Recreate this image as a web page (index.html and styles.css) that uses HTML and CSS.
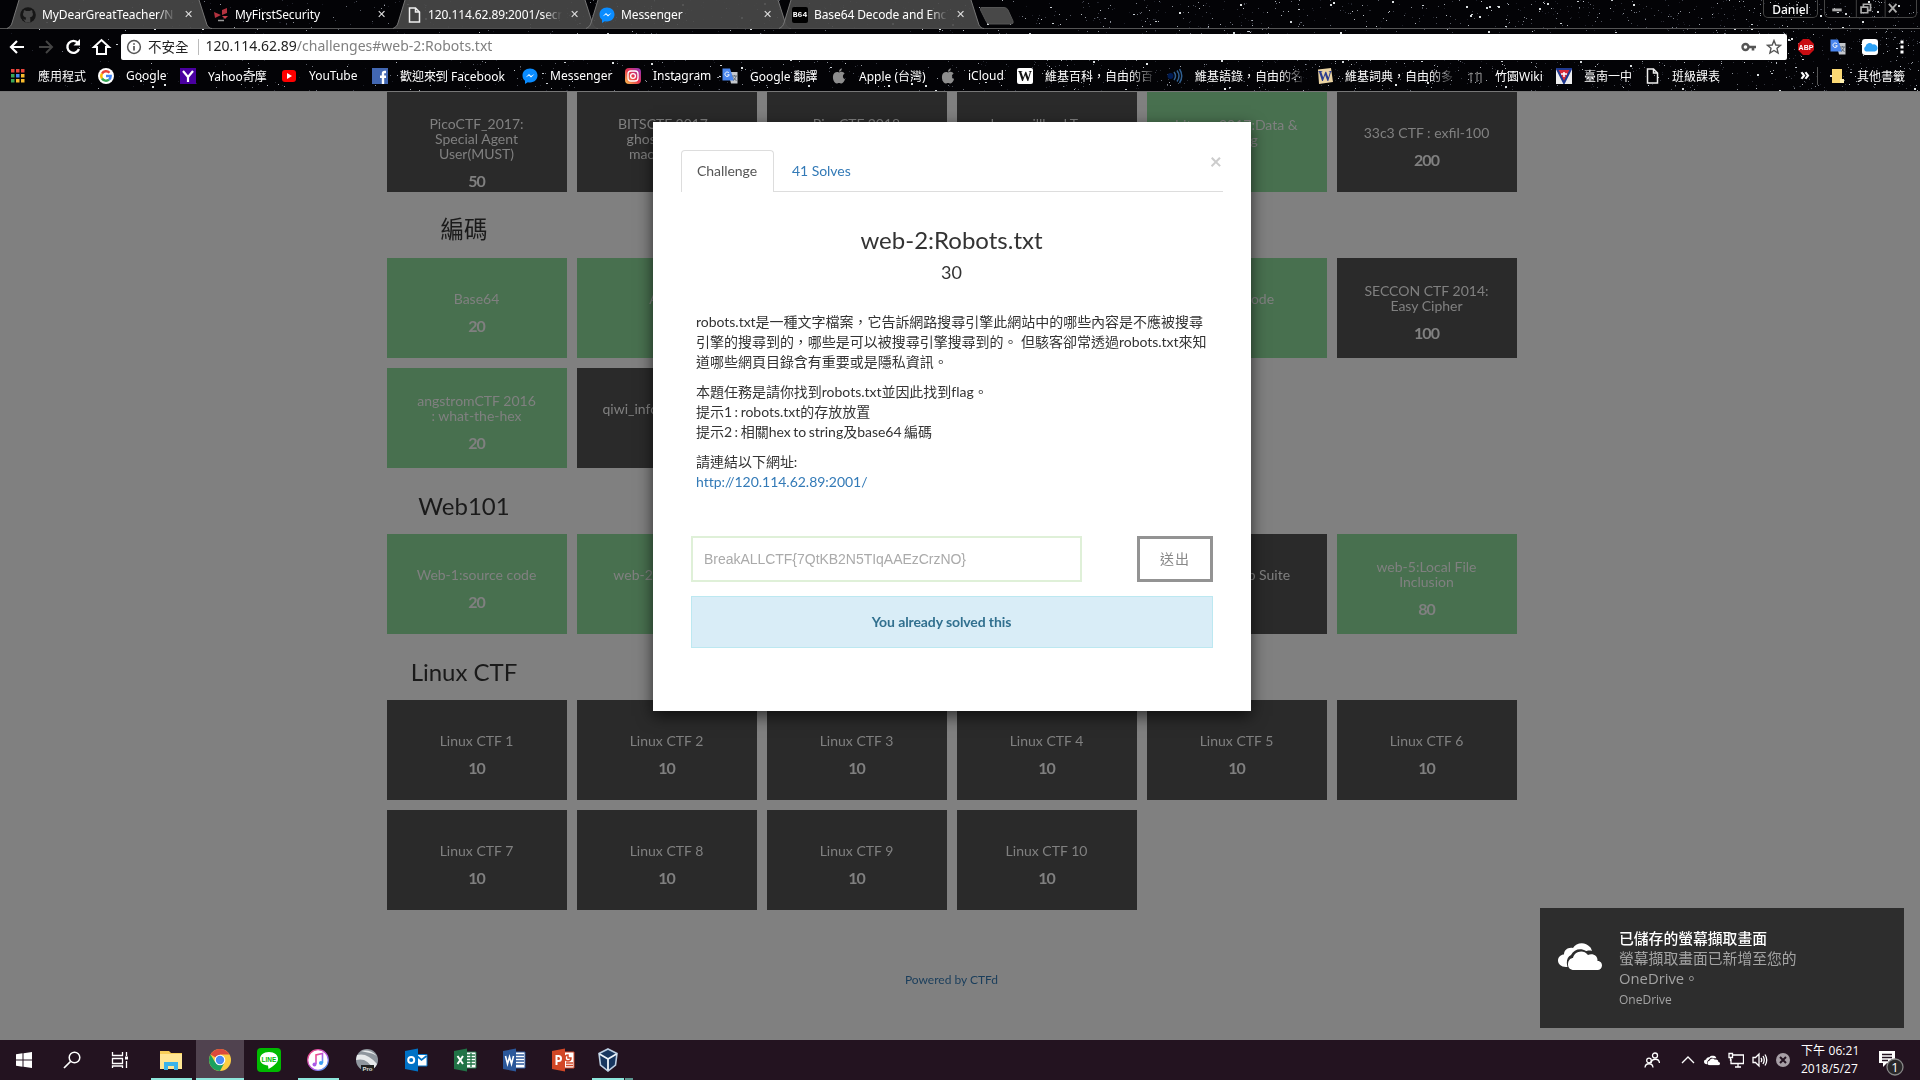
FILE: index.html
```html
<!DOCTYPE html>
<html lang="zh-Hant">
<head>
<meta charset="utf-8">
<title>MyFirstSecurity</title>
<link rel="stylesheet" href="styles.css">
</head>
<body>
<svg width="0" height="0" class="defs">
  <defs>
    <symbol id="tab" viewBox="0 0 205 29"><path d="M0 28.500C3 27 4 26 5 23L12 0H192L200 25C201 27 203 28.500 205 28.500Z" fill="#484848" fill-opacity=".92"/><path d="M0 28.500C3 27 4 26 5 23L12 0M192 0L200 25C201 27 203 28.500 205 28.500" fill="none" stroke="#777"/></symbol>
    <symbol id="page" viewBox="0 0 16 16"><path d="M3.500 1H9.500L13.500 5V15H3.500ZM9.500 1V5H13.500" fill="none" stroke="#eee" stroke-width="1.500"/></symbol>
    <symbol id="msgr" viewBox="0 0 16 16"><path d="M8 .5C3.500.5.5 3.700.5 7.500C.5 10 1.500 11.600 3 12.800V16L5.800 14.200C12 15.500 15.500 11.500 15.500 7.500S12.500.5 8 .5Z" fill="#0a8cff"/><path d="M3.500 9.500L7 6L9 8L12.500 6L9 9.600L7 7.600Z" fill="#fff"/></symbol>
    <symbol id="gtr" viewBox="0 0 16 16"><path d="M6 4H15.500V15.500H9Z" fill="#c4c7cc"/><path d="M.5.500H8L12 12.500H.5Z" fill="#4a86ee"/><path d="M7 5A2.200 2.200 0 1 0 7.300 6.800H5.400" fill="none" stroke="#fff"/><path d="M10 8H15M12.500 7V8M14 8C13.500 10.500 12 12 11 12.500M11.500 9.500L14.500 13" fill="none" stroke="#65707c"/></symbol>
    <symbol id="apple" viewBox="0 0 16 16"><path d="M8 4.500C9 4.500 10 3.500 11.500 4C12.500 4.200 13.200 4.700 13.600 5.500C11 7 11.600 10.300 14 11.300C13.400 13 12 15.500 10.500 15.500C9.500 15.500 9 15 8 15S6.500 15.500 5.700 15.500C3.500 15.500 1.500 11.500 2 8C2.500 4.500 5.500 3.300 8 4.500ZM8 3.800C8 1.800 9.200.5 10.800.2C11 2 9.800 3.700 8 3.800Z" fill="#8d8d8d"/></symbol>
    <symbol id="cloud" viewBox="0 0 44 28"><path d="M8 24C3 24 0 21 0 17.500C0 14 3 11.500 6 11.500C6 7 10 4 15 5C18-.5 27-2 32 4C33 5 33.500 6.500 34 8C31 7 29 8 28 8C23 5 16 6 13 12C9 14 8 19 9.500 24Z" fill="#fff"/><path d="M16 27C12 27 10 24.500 10 21.500C10 17 13 15 15 15C16 9 25 5.500 30 12C35 10 40 13 39.500 18C43 18 44 20.500 44 22.500C44 25 42 27 39.500 27Z" fill="#fff"/></symbol>
  </defs>
</svg>

<header class="chrome">
  <canvas class="stars" id="stars" width="1920" height="91"></canvas>
  <div class="tabstrip">
    <div class="tab"><svg class="tab-shape"><use href="#tab"/></svg>
      <svg class="fav" viewBox="0 0 16 16"><circle cx="8" cy="8" r="7.800" fill="#161616"/><path d="M5.800 15.500V12.800C3.500 13 3.300 11.500 2.500 11M10.300 15.500V12C10.300 11 10 10.700 9.800 10.500C14 10 13 6 12.300 5.300C12.600 4.300 12.300 3.500 12 3.300C11 3.300 10 4 10 4H6S5 3.300 4 3.300C3.700 3.800 3.500 4.500 3.800 5.300C2.500 6.500 2.500 10 6.200 10.500C5.800 11 5.800 12 5.800 12.800V15.500Z" fill="#484848"/></svg>
      <span class="tab-title">MyDearGreatTeacher/N</span><span class="tab-x">✕</span></div>
    <div class="tab active">
      <svg class="fav" viewBox="0 0 16 16"><path d="M1 5L8 8L2 11ZM9 3L14 1V6L9 8Z" fill="#b3323f"/><path d="M9 9H15L12 12Z" fill="#c9404b"/><path d="M5 13.500H11" stroke="#999" stroke-width="1.500"/></svg>
      <span class="tab-title">MyFirstSecurity</span><span class="tab-x">✕</span></div>
    <div class="tab"><svg class="tab-shape"><use href="#tab"/></svg>
      <svg class="fav"><use href="#page"/></svg>
      <span class="tab-title">120.114.62.89:2001/secr</span><span class="tab-x">✕</span></div>
    <div class="tab"><svg class="tab-shape"><use href="#tab"/></svg>
      <svg class="fav"><use href="#msgr"/></svg>
      <span class="tab-title">Messenger</span><span class="tab-x">✕</span></div>
    <div class="tab"><svg class="tab-shape"><use href="#tab"/></svg>
      <span class="fav b64">B64</span>
      <span class="tab-title">Base64 Decode and Enc</span><span class="tab-x">✕</span></div>
    <svg class="newtab" viewBox="0 0 36 18"><path d="M2 .5H25Q28 .5 29 3L34 14Q35 17 32 17H11Q8 17 7 14L1.500 3Q1 .5 2 .5Z" fill="#484848" stroke="#555"/></svg>
    <div class="win">
      <span class="user">Daniel</span>
      <div class="winbtns">
        <svg viewBox="0 0 93 18"><path d="M31.500 0V18M62 0V18" stroke="#444"/><path d="M6 10.500H16" stroke="#aaa" stroke-width="3"/><path d="M36.500 7.500H43.500V13.500H36.500ZM39 7V4.500H46.500V11H44" fill="none" stroke="#aaa" stroke-width="1.800"/><path d="M66 4L74 13M74 4L66 13" stroke="#aaa" stroke-width="2"/></svg>
      </div>
    </div>
  </div>
  <div class="toolbar">
    <svg class="nav" viewBox="0 0 112 26"><path d="M18 13H5M11 7L5 13L11 19" fill="none" stroke="#fff" stroke-width="2.200"/><path d="M33 13H45M40 7L46 13L40 19" fill="none" stroke="#444" stroke-width="2"/><path d="M72 9A6 6 0 1 0 73 15" fill="none" stroke="#fff" stroke-width="2.400"/><path d="M74 5V11.500H67.500Z" fill="#fff"/><path d="M88 13L95.500 6L103 13H100V20H91V13Z" fill="none" stroke="#fff" stroke-width="2"/></svg>
    <div class="omnibox">
      <svg class="info" viewBox="0 0 16 16"><circle cx="8" cy="8" r="6.400" fill="none" stroke="#555" stroke-width="1.500"/><path d="M8 7V11.500M8 4.300V5.800" stroke="#555" stroke-width="1.700"/></svg>
      <span class="insecure">不安全</span><i class="bar"></i>
      <span class="url">120.114.62.89<span>/challenges#web-2:Robots.txt</span></span>
      <svg class="omni-icons" viewBox="0 0 42 16"><circle cx="5.500" cy="8" r="3" fill="none" stroke="#555" stroke-width="2.400"/><path d="M8 8H16M13 8V11.500" stroke="#555" stroke-width="2.600"/><path d="M34 1.500L35.800 6L40.500 6.300L37 9.300L38.100 14L34 11.500L29.900 14L31 9.300L27.500 6.300L32.200 6Z" fill="none" stroke="#555" stroke-width="1.400"/></svg>
    </div>
    <div class="exts">
      <svg viewBox="0 0 16 16"><path d="M5 0H11L16 5V11L11 16H5L0 11V5Z" fill="#c90d12"/><text x="8" y="11" text-anchor="middle" class="abp">ABP</text></svg>
      <svg><use href="#gtr"/></svg>
      <svg viewBox="0 0 16 16"><rect width="16" height="16" rx="3" fill="#fff"/><path d="M4 12.500A2.800 2.800 0 0 1 3.500 7.500A4 4 0 0 1 10.500 5.500A3.400 3.400 0 0 1 13 12.500Z" fill="#2ca0f4"/></svg>
      <svg viewBox="0 0 16 16"><path d="M6.500 1.500H9.500V4.500H6.500ZM6.500 6.500H9.500V9.500H6.500ZM6.500 11.500H9.500V14.500H6.500Z" fill="#fff"/></svg>
    </div>
  </div>
  <nav class="bookmarks">
    <a class="bm"><svg viewBox="0 0 16 16"><path d="M1 1H4.500V4.500H1ZM6 1H9.500V4.500H6ZM11 1H14.500V4.500H11Z" fill="#e8453c"/><path d="M1 6H4.500V9.500H1Z" fill="#3aa757"/><path d="M6 6H9.500V9.500H6Z" fill="#4688f1"/><path d="M11 6H14.500V9.500H11ZM6 11H9.500V14.500H6ZM11 11H14.500V14.500H11Z" fill="#f9bb2d"/><path d="M1 11H4.500V14.500H1Z" fill="#3aa757"/></svg><span>應用程式</span></a>
    <a class="bm"><svg viewBox="0 0 16 16"><circle cx="8" cy="8" r="8" fill="#fff"/><g fill="none" stroke-width="2.400"><path d="M11.500 4.800A4.700 4.700 0 0 0 4 5.600" stroke="#ea4335"/><path d="M4 5.600A4.700 4.700 0 0 0 4 10.500" stroke="#fbbc05"/><path d="M4 10.500A4.700 4.700 0 0 0 11 11.600" stroke="#34a853"/><path d="M11 11.600A4.700 4.700 0 0 0 12.700 8H8" stroke="#4285f4"/></g></svg><span>Google</span></a>
    <a class="bm"><svg viewBox="0 0 16 16"><path d="M0 0H16V16H0Z" fill="#4a00a0"/><path d="M3 3L8 9L13 3M8 9V14" fill="none" stroke="#fff" stroke-width="2.200"/></svg><span>Yahoo奇摩</span></a>
    <a class="bm"><svg viewBox="0 0 16 16"><rect y="2" x="1" width="14" height="12" rx="3" fill="#f00"/><path d="M6 5V11L11 8Z" fill="#fff"/></svg><span>YouTube</span></a>
    <a class="bm"><svg viewBox="0 0 16 16"><path d="M0 0H16V16H0Z" fill="#4267b2"/><path d="M14 4H12.500Q11 4 11 5.500V16M8 8.800H14" fill="none" stroke="#fff" stroke-width="2.400"/></svg><span>歡迎來到 Facebook</span></a>
    <a class="bm"><svg><use href="#msgr"/></svg><span>Messenger</span></a>
    <a class="bm"><svg viewBox="0 0 16 16"><defs><linearGradient id="ig" x1="0" y1="1" x2="1" y2="0"><stop offset="0" stop-color="#ffc64d"/><stop offset=".5" stop-color="#e6334c"/><stop offset="1" stop-color="#8b35c7"/></linearGradient></defs><rect width="16" height="16" rx="4" fill="url(#ig)"/><rect x="3" y="3" width="10" height="10" rx="3" fill="none" stroke="#fff" stroke-width="1.300"/><circle cx="8" cy="8" r="2.400" fill="none" stroke="#fff" stroke-width="1.300"/></svg><span>Instagram</span></a>
    <a class="bm"><svg><use href="#gtr"/></svg><span>Google 翻譯</span></a>
    <a class="bm"><svg><use href="#apple"/></svg><span>Apple (台灣)</span></a>
    <a class="bm"><svg><use href="#apple"/></svg><span>iCloud</span></a>
    <a class="bm"><svg viewBox="0 0 16 16"><rect width="16" height="16" rx="2" fill="#fff"/><text x="8" y="13" text-anchor="middle" class="wiki">W</text></svg><span class="fade">維基百科，自由的百</span></a>
    <a class="bm"><svg viewBox="0 0 16 16"><circle cx="3.500" cy="8" r="3" fill="#001c54"/><path d="M7 4Q10 8 7 12M10 2.500Q14 8 10 13.500M12.500 1Q17 8 12.500 15" fill="none" stroke="#305f91" stroke-width="1.500"/></svg><span class="fade">維基語錄，自由的名</span></a>
    <a class="bm"><svg viewBox="0 0 16 16"><path d="M1 1.500L14 0L16 14L2 16Z" fill="#ead3a3"/><text x="8" y="13" text-anchor="middle" class="wiki blue">W</text></svg><span class="fade">維基詞典，自由的多</span></a>
    <a class="bm"><svg viewBox="0 0 16 16"><path d="M1 7L4 5L6 6M4 5V15M8 6L11 4M10 6L14 5V15M10 6V14" fill="none" stroke="#999"/></svg><span>竹園Wiki</span></a>
    <a class="bm"><svg viewBox="0 0 16 16"><path d="M0 0H16V16H0Z" fill="#eee"/><path d="M1 1H15L8 15Z" fill="#d92b3a" stroke="#203a91" stroke-width="2"/><path d="M5 6H11M8 4V9" stroke="#fff" stroke-width="1.500"/></svg><span>臺南一中</span></a>
    <a class="bm"><svg><use href="#page"/></svg><span>班級課表</span></a>
    <span class="more">»</span>
    <a class="bm other"><svg viewBox="0 0 16 16"><path d="M3 1H13V15H3Z" fill="#fbd974"/><path d="M11 11H15V15H11Z" fill="#fff0b0"/></svg><span>其他書籤</span></a>
  </nav>
</header>

<main class="page">
  <div class="board">
    <div class="grid">
      <div class="tile l3"><p>PicoCTF_2017:<br>Special Agent<br>User(MUST)</p><b>50</b></div>
      <div class="tile l3"><p>BITSCTF 2017 :<br>ghost in the :<br>machine(60)</p><b>50</b></div>
      <div class="tile l3"><p>PicoCTF 2018</p><b>50</b></div>
      <div class="tile l3"><p>haxorvillhackTrace</p><b>50</b></div>
      <div class="tile l2 ok"><p>hitcon-2017:Data &amp;<br>Mining</p><b>50</b></div>
      <div class="tile"><p>33c3 CTF : exfil-100</p><b>200</b></div>
    </div>
    <h3>編碼</h3>
    <div class="grid">
      <div class="tile ok"><p>Base64</p><b>20</b></div>
      <div class="tile ok"><p>ASCII</p><b>20</b></div>
      <div class="tile ok"><p>Hex</p><b>20</b></div>
      <div class="tile ok"><p>Base32</p><b>20</b></div>
      <div class="tile ok"><p>Morse Code</p><b>20</b></div>
      <div class="tile l2"><p>SECCON CTF 2014:<br>Easy Cipher</p><b>100</b></div>
      <div class="tile l2 ok"><p>angstromCTF 2016<br>: what-the-hex</p><b>20</b></div>
      <div class="tile"><p>qiwi_infosec_2016-1</p><b>50</b></div>
    </div>
    <h3>Web101</h3>
    <div class="grid">
      <div class="tile ok"><p>Web-1:source code</p><b>20</b></div>
      <div class="tile ok"><p>web-2:Robots.txt</p><b>30</b></div>
      <div class="tile ok"><p>web-3</p><b>30</b></div>
      <div class="tile"><p>web-4</p><b>50</b></div>
      <div class="tile"><p>web-4:Burp Suite</p><b>50</b></div>
      <div class="tile l2 ok"><p>web-5:Local File<br>Inclusion</p><b>80</b></div>
    </div>
    <h3>Linux CTF</h3>
    <div class="grid">
      <div class="tile"><p>Linux CTF 1</p><b>10</b></div>
      <div class="tile"><p>Linux CTF 2</p><b>10</b></div>
      <div class="tile"><p>Linux CTF 3</p><b>10</b></div>
      <div class="tile"><p>Linux CTF 4</p><b>10</b></div>
      <div class="tile"><p>Linux CTF 5</p><b>10</b></div>
      <div class="tile"><p>Linux CTF 6</p><b>10</b></div>
      <div class="tile"><p>Linux CTF 7</p><b>10</b></div>
      <div class="tile"><p>Linux CTF 8</p><b>10</b></div>
      <div class="tile"><p>Linux CTF 9</p><b>10</b></div>
      <div class="tile"><p>Linux CTF 10</p><b>10</b></div>
    </div>
  </div>
  <footer class="powered">Powered by CTFd</footer>

  <section class="modal">
    <div class="modal-tabs"><span class="mtab on">Challenge</span><span class="mtab">41 Solves</span><span class="close">×</span></div>
    <h2>web-2:Robots.txt</h2>
    <h4>30</h4>
    <div class="desc">
      <p>robots.txt是一種文字檔案，它告訴網路搜尋引擎此網站中的哪些內容是不應被搜尋<br>引擎的搜尋到的，哪些是可以被搜尋引擎搜尋到的。 但駭客卻常透過robots.txt來知<br>道哪些網頁目錄含有重要或是隱私資訊。</p>
      <p>本題任務是請你找到robots.txt並因此找到flag。<br><span class="hint">提示1 : robots.txt的存放放置<br>提示2 : 相關hex to string及base64 編碼</span></p>
      <p>請連結以下網址:<br><a>http://120.114.62.89:2001/</a></p>
    </div>
    <div class="answer"><div class="field">BreakALLCTF{7QtKB2N5TIqAAEzCrzNO}</div><div class="send">送出</div></div>
    <div class="alert">You already solved this</div>
  </section>

  <aside class="toast">
    <svg viewBox="0 0 44 28"><use href="#cloud"/></svg>
    <div><strong>已儲存的螢幕擷取畫面</strong><p>螢幕擷取畫面已新增至您的<br>OneDrive。</p><small>OneDrive</small></div>
  </aside>
</main>

<footer class="taskbar">
  <div class="tb"><svg viewBox="0 0 24 24"><path d="M4 6.300L10.500 5.300V11.500H4ZM11.500 5.200L20 4V11.500H11.500ZM4 12.500H10.500V18.700L4 17.700ZM11.500 12.500H20V20L11.500 18.800Z" fill="#fff"/></svg></div>
  <div class="tb"><svg viewBox="0 0 24 24"><circle cx="14.500" cy="9.500" r="5.300" fill="none" stroke="#fff" stroke-width="1.500"/><path d="M10.500 13.500L4 20" stroke="#fff" stroke-width="1.700"/></svg></div>
  <div class="tb"><svg viewBox="0 0 24 24"><path d="M4.500 4V7.500H14.500V4M4.500 10.500H14.500V15.500H4.500ZM4.500 20V18H14.500V20M18.500 4V8M18.500 13V20" fill="none" stroke="#fff" stroke-width="1.300"/><path d="M17 8.500H20V11.500H17Z" fill="#fff"/></svg></div>
  <div class="tb open"><svg viewBox="0 0 24 24"><path d="M1 3H10L12 5H23V21H1Z" fill="#f7ce58"/><path d="M1 6H23V21H1Z" fill="#ffe694"/><path d="M5 14H19V22H15V18H9V22H5Z" fill="#3ab3ea"/></svg></div>
  <div class="tb open current"><svg viewBox="0 0 24 24"><circle cx="12" cy="12" r="11" fill="#fccd42"/><path d="M12 12L2.500 6.500A11 11 0 0 1 21.500 6.500H12Z" fill="#dc4a3d"/><path d="M2.500 6.500A11 11 0 0 0 12 23L16.500 14.500L7 14Z" fill="#1aa15f"/><circle cx="12" cy="12" r="5.300" fill="#fff"/><circle cx="12" cy="12" r="4.200" fill="#4a8af4"/></svg></div>
  <div class="tb"><svg viewBox="0 0 24 24"><rect width="24" height="24" rx="4" fill="#00b900"/><path d="M12 4C6.500 4 3 7 3 11C3 14.500 6 17 11 17.500L11.500 21C16 18.500 21 15 21 11C21 7 17.500 4 12 4Z" fill="#fff"/><text x="12" y="13.500" text-anchor="middle" class="line">LINE</text></svg></div>
  <div class="tb open"><svg viewBox="0 0 24 24"><defs><linearGradient id="it" x2="1" y2="1"><stop stop-color="#fb4877"/><stop offset=".6" stop-color="#b45be8"/><stop offset="1" stop-color="#2eb4f4"/></linearGradient></defs><circle cx="12" cy="12" r="10.300" fill="#fff" stroke="url(#it)" stroke-width="1.200"/><path d="M10 16V7L16.500 5.500V15" fill="none" stroke="url(#it)" stroke-width="1.600"/><circle cx="8.500" cy="16.500" r="2" fill="#a95be8"/><circle cx="15" cy="15" r="2" fill="#3b9ff4"/></svg></div>
  <div class="tb"><svg viewBox="0 0 24 24"><circle cx="12" cy="12" r="11" fill="#8f969e"/><path d="M2 7Q12 4 22 16Q20 20 18 21Q12 9 1 12ZM6 3Q15 1 22 8Q18 5 10 4Z" fill="#e7e9eb"/><path d="M6 17H19V23H6Z" fill="#222"/><text x="12.500" y="22.500" text-anchor="middle" class="pro">Pro</text></svg></div>
  <div class="tb"><svg viewBox="0 0 24 24"><path d="M12 6.500H23V18H12Z" fill="#fff" stroke="#0072c6"/><path d="M13 8L17.500 12L22.500 8" fill="none" stroke="#0072c6" stroke-width="1.700"/><path d="M1 3L14 .5V23.500L1 21Z" fill="#0072c6"/><circle cx="7.200" cy="12" r="3" fill="none" stroke="#fff" stroke-width="2"/></svg></div>
  <div class="tb"><svg viewBox="0 0 24 24"><path d="M12 4H23V20H12Z" fill="#fff" stroke="#217346"/><path d="M14 7H22M14 10H22M14 13H22M14 16H22M18 5V19" stroke="#217346" stroke-width="1.300"/><path d="M1 3L14 .5V23.500L1 21Z" fill="#217346"/><path d="M4.500 8L10 16M10 8L4.500 16" stroke="#fff" stroke-width="2"/></svg></div>
  <div class="tb"><svg viewBox="0 0 24 24"><path d="M12 4H23V20H12Z" fill="#fff" stroke="#2b579a"/><path d="M14 7H22M14 10H22M14 13H22M14 16H22" stroke="#2b579a" stroke-width="1.400"/><path d="M1 3L14 .5V23.500L1 21Z" fill="#2b579a"/><path d="M3.500 8L5.500 16L7.500 9L9.500 16L11.500 8" fill="none" stroke="#fff" stroke-width="1.600"/></svg></div>
  <div class="tb"><svg viewBox="0 0 24 24"><path d="M12 4H23V20H12Z" fill="#fff" stroke="#d24726"/><path d="M15 15H22M15 17.500H22M17 7A3 3 0 1 0 20 10H17Z" fill="none" stroke="#d24726" stroke-width="1.500"/><path d="M1 3L14 .5V23.500L1 21Z" fill="#d24726"/><path d="M5.500 17V8H7.500Q10 8 10 10.500T7.500 13H5.500" fill="none" stroke="#fff" stroke-width="2"/></svg></div>
  <div class="tb open multi"><svg viewBox="0 0 24 24"><path d="M12 1L21 5.500L19.500 17L12 23L4.500 17L3 5.500Z" fill="#17365f" stroke="#bcd0e4" stroke-width="1.600"/><path d="M3.500 6L12 11L20.500 6M12 11V22" fill="none" stroke="#eef4fa" stroke-width="1.800"/></svg></div>
  <i class="stack"></i>
  <div class="tray">
    <svg class="people" viewBox="0 0 16 16"><circle cx="11" cy="3.500" r="2.500"/><path d="M7 11C8 6 15 6 15.500 11"/><circle cx="5" cy="8.500" r="2.300"/><path d="M1 15.500C1.500 10.500 8.500 10.500 9 15.500"/></svg>
    <svg class="chev" viewBox="0 0 16 16"><path d="M2 11L8 5L14 11"/></svg>
    <svg class="od" viewBox="0 0 44 28"><use href="#cloud"/></svg>
    <svg viewBox="0 0 16 16"><path d="M4 3H15.500V11.500H3V7M7 15H13M10 12V15M1 1.500H4.500V5.500H1ZM2.500 6V9"/></svg>
    <svg viewBox="0 0 16 16"><path d="M1 5.500H3.500L7 2V14L3.500 10.500H1ZM9 6Q10.500 8 9 10M11 4Q13.500 8 11 12M13 2.500Q16.500 8 13 13.500"/></svg>
    <svg viewBox="0 0 16 16"><circle cx="7" cy="8" r="7" class="disc"/><path d="M4 5L10 11M10 5L4 11" class="dx"/></svg>
    <div class="clock"><span>下午 06:21</span><span>2018/5/27</span></div>
    <svg class="note" viewBox="0 0 26 26"><path d="M0 1H16V13H8L4 17V13H0Z" class="fill"/><path d="M3 4.500H13M3 7.500H13M3 10.500H9" class="dark"/><circle cx="16" cy="17" r="8" class="badge"/><text x="16" y="22" text-anchor="middle" class="num">1</text></svg>
  </div>
</footer>
<script src="stars.js"></script>
</body>
</html>
```
FILE: styles.css
```css
* { box-sizing: border-box; }
body { margin: 0; width: 1920px; height: 1080px; overflow: hidden; display: flex; flex-direction: column; background: #808080; font-family: Lato, "Noto Sans CJK TC", sans-serif; }
p, h2, h3, h4 { margin: 0; font-weight: 400; }
.defs { position: absolute; }

.chrome { position: relative; height: 92px; flex: none; background: #030306; color: #fff; border-bottom: 1px solid #777; font: 12px "Noto Sans", "Noto Sans CJK TC", sans-serif; }
.stars { position: absolute; left: 0; top: 0; }
.tabstrip, .toolbar, .bookmarks { position: relative; display: flex; }
.tabstrip { height: 29px; padding-left: 7px; border-bottom: 1px solid #555; }
.tab { position: relative; width: 205px; height: 29px; margin-right: -12px; padding: 0 17px 0 13px; display: flex; align-items: center; flex: none; }
.tab-shape { position: absolute; left: 0; top: 0; width: 205px; height: 29px; }
.fav { position: relative; width: 16px; height: 16px; flex: none; }
.b64 { background: #000; font: bold 8px/16px "Liberation Mono", monospace; text-align: center; border-radius: 2px; }
.tab-title { position: relative; width: 134px; margin-left: 6px; overflow: hidden; white-space: nowrap; letter-spacing: -.1px; -webkit-mask-image: linear-gradient(90deg, #000 115px, transparent 134px); mask-image: linear-gradient(90deg, #000 115px, transparent 134px); }
.tab-x { position: relative; margin-left: 8px; font: 11px "DejaVu Sans", sans-serif; color: #ddd; }
.newtab { width: 36px; height: 18px; margin: 7px 0 0 7px; }
.win { display: flex; margin-left: auto; gap: 6px; padding-right: 3px; align-items: flex-start; }
.user { width: 55px; height: 18px; border: 1px solid #444; border-top: 0; border-radius: 0 0 5px 5px; text-align: center; font-weight: 500; line-height: 19px; }
.winbtns { height: 18px; width: 93px; border: 1px solid #444; border-top: 0; border-radius: 0 0 5px 5px; }
.winbtns svg { display: block; width: 91px; height: 17px; }
.toolbar { height: 31px; padding-top: 5px; }
.nav { width: 112px; height: 26px; margin-left: 6px; flex: none; }
.omnibox { margin-left: 3px; width: 1666px; height: 26px; background: #fff; border-radius: 2px; display: flex; align-items: center; color: #222; padding: 0 5px; flex: none; }
.info { width: 16px; height: 16px; }
.insecure { margin-left: 6px; font-size: 13.5px; line-height: 18px; padding-bottom: 1px; }
.bar { width: 1px; height: 16px; background: #bbb; margin: 0 7px 0 9px; }
.url { font-size: 14px; line-height: 18px; padding-bottom: 2px; }
.url span { color: #808080; }
.omni-icons { width: 42px; height: 16px; margin-left: auto; }
.exts { display: flex; align-items: center; gap: 16px; margin-left: 11px; }
.exts svg { width: 16px; height: 16px; }
.abp { font: bold 7px "Liberation Sans", sans-serif; fill: #fff; }
.bookmarks { height: 31px; padding-left: 10px; align-items: center; }
.bm { display: flex; align-items: center; gap: 12px; flex: none; white-space: nowrap; width: 88px; }
.bm svg { width: 16px; height: 16px; flex: none; }
.bm:nth-child(2) { width: 82px; }
.bm:nth-child(3) { width: 101px; }
.bm:nth-child(4) { width: 91px; }
.bm:nth-child(5) { width: 150px; }
.bm:nth-child(6) { width: 103px; }
.bm:nth-child(7) { width: 97px; }
.bm:nth-child(8) { width: 109px; }
.bm:nth-child(9) { width: 109px; }
.bm:nth-child(10) { width: 77px; }
.bm:nth-child(11), .bm:nth-child(12), .bm:nth-child(13) { width: 150px; }
.bm:nth-child(14) { width: 89px; }
.fade { -webkit-mask-image: linear-gradient(90deg, #000 85px, transparent 112px); mask-image: linear-gradient(90deg, #000 85px, transparent 112px); }
.wiki { font: bold 14px "Liberation Serif", serif; fill: #111; }
.wiki.blue { fill: #2b3c8f; }
.more { margin-left: 68px; width: 17px; font-size: 16px; font-weight: 700; line-height: 16px; padding-bottom: 4px; }
.other { border-left: 1px solid #555; padding-left: 11px; width: 100px; }

.page { position: relative; height: 948px; flex: none; }
.board { width: 1140px; margin-left: 387px; }
.grid { display: grid; grid-template-columns: repeat(6, 180px); gap: 10px; }
.tile { height: 100px; background: #2a2a2a; color: #808080; text-align: center; padding: 33px 1px 0 0; font-size: 14px; line-height: 15px; display: flex; flex-direction: column; gap: 12px; }
.tile.l2 { padding-top: 25px; }
.tile.l3 { padding-top: 24px; }
.tile.ok { background: #48704f; }
.tile b { font-size: 16px; line-height: 15px; letter-spacing: -1px; }
.board h3 { width: 154px; height: 66px; padding-top: 9px; line-height: 58px; font-size: 24px; color: #1a1a1a; text-align: center; }
.board h3:first-of-type { font-size: 23.5px; line-height: 57px; }
.powered { padding-top: 62px; text-align: center; width: 1903px; font-size: 12px; line-height: 16px; color: #193d5b; }

.modal { position: absolute; left: 653px; top: 30px; width: 598px; height: 589px; background: #fff; color: #333; padding: 28px 28px 0; box-shadow: 0 5px 15px rgba(0, 0, 0, .65); }
.modal-tabs { display: flex; height: 42px; border-bottom: 1px solid #ddd; font-size: 14px; }
.mtab { padding: 0 16px; line-height: 41px; color: #337ab7; height: 42px; letter-spacing: -.05px; }
.mtab.on { width: 93px; padding: 0 15px; line-height: 39px; color: #555; background: #fff; border: 1px solid #ddd; border-bottom: 0; border-radius: 4px 4px 0 0; margin-right: 2px; }
.close { margin-left: auto; padding-right: 1px; font-size: 21px; font-weight: 700; line-height: 21px; color: #ccc; }
.modal h2 { margin-top: 33px; font-size: 24px; line-height: 30px; text-align: center; padding-right: 1px; }
.modal h4 { margin-top: 7px; font-size: 18px; line-height: 20px; text-align: center; padding-right: 1px; }
.desc { margin: 30px 0 0 15px; font-size: 14px; line-height: 20px; white-space: nowrap; letter-spacing: -.02px; }
.desc p { margin-bottom: 10px; }
.desc a { color: #337ab7; }
.hint { word-spacing: -1px; }
.answer { display: flex; justify-content: space-between; margin: 44px 10px 0; height: 46px; }
.field { width: 391px; border: 2px solid #dff0d8; padding-left: 11px; color: #aaa; font: 14px/42px "Liberation Sans", sans-serif; letter-spacing: -.03px; }
.send { width: 76px; border: 3px solid #939393; color: #888; text-align: center; font-size: 14px; line-height: 40px; letter-spacing: 1px; }
.alert { margin: 14px 10px 0; height: 52px; border: 1px solid #bce8f1; background: #d9edf7; color: #31708f; font-size: 14px; font-weight: 700; line-height: 50px; text-align: center; padding-right: 21px; letter-spacing: -.1px; }

.toast { position: absolute; left: 1540px; top: 816px; width: 364px; height: 120px; background: #2d2d2d; color: #a3a3a3; display: flex; gap: 17px; padding: 20px 18px; font-family: "Open Sans", "Noto Sans CJK TC", sans-serif; }
.toast svg { width: 44px; height: 28px; margin-top: 15px; flex: none; }
.toast strong { display: block; color: #fff; font-size: 14.8px; font-weight: 500; line-height: 20px; }
.toast p { font-size: 14.8px; line-height: 20px; }
.toast small { display: block; font-size: 12px; line-height: 24px; }

.taskbar { height: 40px; flex: none; background: #231320; display: flex; }
.tb { width: 49px; height: 40px; display: flex; align-items: center; justify-content: center; padding-right: 1px; }
.tb:nth-child(2) { padding-right: 4px; }
.tb:nth-child(3) { padding-right: 6px; }
.tb svg { width: 24px; height: 24px; flex: none; }
.tb.open { box-shadow: inset 0 -2px #8ee6dc; margin: 0 4px; width: 41px; }
.tb.current { background: #50424f; width: 48px; margin: 0 1px 0 0; padding: 0; }
.tb.multi { width: 32px; margin-right: 1px; padding: 0; }
.stack { width: 8px; height: 40px; box-shadow: inset 0 -2px #5c9690; }
.tray { margin-left: auto; display: flex; align-items: center; gap: 8px; padding-right: 15px; }
.tray svg { width: 16px; height: 16px; fill: none; stroke: #fff; stroke-width: 1.3; }
.tray .people { margin-right: 12px; }
.tray .od { stroke: none; height: 11px; }
.tray .disc { fill: #a79fa6; stroke: none; }
.tray .dx { stroke: #231320; stroke-width: 2; }
.clock { display: flex; flex-direction: column; width: 60px; margin: 0 10px 0 1px; color: #fff; font: 12px/18px "Open Sans", "Noto Sans CJK TC", sans-serif; white-space: nowrap; }
.clock span:first-child { letter-spacing: .1px; }
.tray .note { width: 26px; height: 26px; stroke: none; margin-top: 6px; }
.note .fill { fill: #fff; }
.note .dark { stroke: #231320; }
.note .badge { fill: #292729; stroke: #888; }
.note .num { fill: #fff; font: 13px "Open Sans", sans-serif; }
.line { font: bold 6.5px "Liberation Sans", sans-serif; fill: #00b900; }
.pro { font: bold 6px "Liberation Sans", sans-serif; fill: #ddd; }
```
FILE: stars.js
```js
// Night-sky theme behind the browser toolbar; denser towards the right.
const sky = document.getElementById('stars').getContext('2d');
let seed = 20180527;
const rnd = () => (seed = (seed * 16807) % 2147483647) / 2147483647;
for (let i = 0; i < 2600; i++) {
  const x = Math.floor(1920 * Math.pow(rnd(), 0.65));
  const y = Math.floor(rnd() * 91);
  const v = rnd();
  sky.fillStyle = `rgba(${190 + v * 60 | 0}, ${205 + v * 50 | 0}, 255, ${0.12 + v * v * 0.8})`;
  sky.fillRect(x, y, v > 0.92 ? 2 : 1, v > 0.95 ? 2 : 1);
}
```
